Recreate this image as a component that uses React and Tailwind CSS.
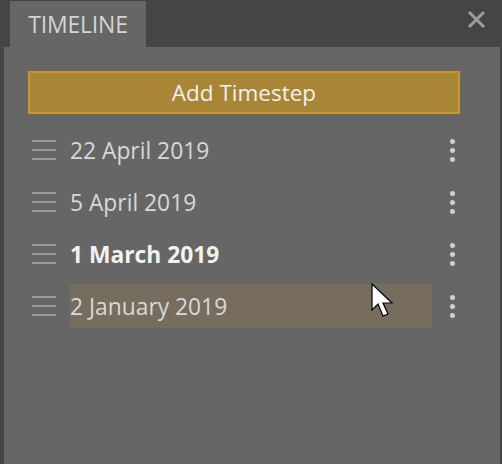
import React from "react";

const rows = [
  { label: "22 April 2019" },
  { label: "5 April 2019" },
  { label: "1 March 2019", bold: true },
  { label: "2 January 2019", hover: true },
];

function Hamburger() {
  return (
    <div className="flex w-[24px] flex-col gap-[7px] shrink-0">
      <div className="h-[2px] bg-[#9a9a9a]" />
      <div className="h-[2px] bg-[#9a9a9a]" />
      <div className="h-[2px] bg-[#9a9a9a]" />
    </div>
  );
}

function Kebab() {
  return (
    <div className="flex flex-col items-center gap-[4px] w-[6px]">
      <div className="h-[5px] w-[5px] rounded-full bg-[#d0d0d0]" />
      <div className="h-[5px] w-[5px] rounded-full bg-[#d0d0d0]" />
      <div className="h-[5px] w-[5px] rounded-full bg-[#d0d0d0]" />
    </div>
  );
}

export default function App() {
  return (
    <div
      className="relative flex h-[464px] w-[502px] flex-col bg-[#454545] pt-[1px] pl-[4px] pr-[2px]"
      style={{ fontFamily: '"Open Sans", "Noto Sans", sans-serif' }}
    >
      <div className="flex h-[46px] items-start">
        <div className="ml-[6px] flex h-[46px] w-[136px] items-center justify-center bg-[#666666] pt-[1px]">
          <span className="text-[23px] leading-none text-[#d4d4d4] tracking-[-0.2px]">TIMELINE</span>
        </div>
        <div className="flex-1" />
        <svg className="mt-[9px] mr-[14px]" width="19" height="19" viewBox="0 0 19 19">
          <path d="M2 2 L17 17 M17 2 L2 17" stroke="#9c9c9c" strokeWidth="3" />
        </svg>
      </div>
      <div className="flex flex-1 flex-col bg-[#666666] pt-[24px] pl-[24px] pr-[36px]">
        <button className="flex h-[43px] w-[432px] items-center justify-center border-2 border-[#c9962a] bg-[#a98536] text-[22.5px] text-[#f0f0f0]">
          Add Timestep
        </button>
        <div className="mt-[14px] flex flex-col gap-[8px]">
          {rows.map((r) => (
            <div key={r.label} className="flex h-[44px] items-center">
              <div className="ml-[4px] mr-[14px]">
                <Hamburger />
              </div>
              <div
                className={
                  "flex h-[44px] w-[362px] items-center pt-[3px] text-[22.8px] " +
                  (r.hover ? "bg-[#766d5e] " : "") +
                  (r.bold ? "font-bold text-[#f2f2f2]" : "text-[#d8d8d8]")
                }
              >
                {r.label}
              </div>
              <div className="ml-[17px]">
                <Kebab />
              </div>
            </div>
          ))}
        </div>
      </div>
      <svg
        className="absolute left-[371px] top-[283px]"
        width="26"
        height="38"
        viewBox="0 0 26 38"
      >
        <path
          d="M1 1 L1 27 L7 21 L12 33 L17 31 L12 20 L21 20 Z"
          fill="#ffffff"
          stroke="#000000"
          strokeWidth="1.2"
          strokeLinejoin="miter"
        />
      </svg>
    </div>
  );
}
